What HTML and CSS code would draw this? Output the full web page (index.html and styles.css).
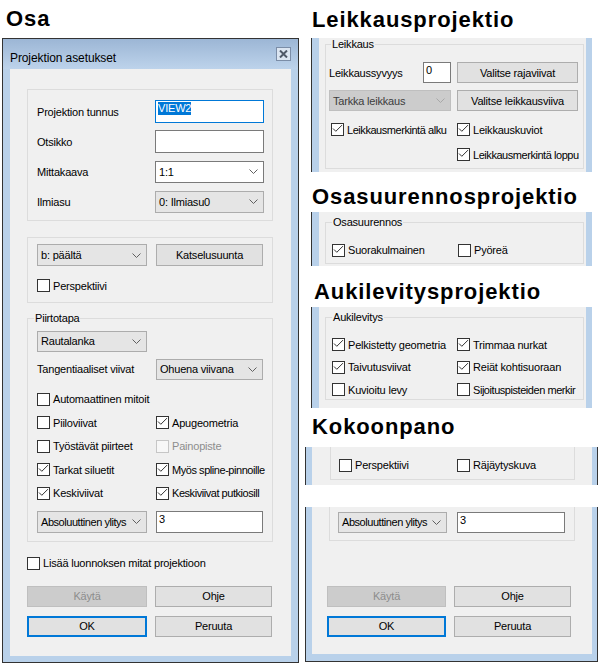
FILE: index.html
```html
<!DOCTYPE html>
<html>
<head>
<meta charset="utf-8">
<link rel="stylesheet" href="styles.css">
</head>
<body>
<div class="page">
  <div class="col-left">
    <div class="h h-osa">Osa</div>
    <div class="dialog">
      <div class="titlebar">
        <span class="title">Projektion asetukset</span>
        <span class="close"><svg width="9" height="8" viewBox="0 0 9 8"><path d="M1 0.5L8 7.5M8 0.5L1 7.5" stroke="#4f5968" stroke-width="2" fill="none"/></svg></span>
      </div>
      <div class="frame">
        <div class="client main">
          <div class="grp g1">
            <div class="row"><span class="lbl">Projektion tunnus</span><div class="tb focus"><span class="sel">VIEW2</span></div></div>
            <div class="row"><span class="lbl">Otsikko</span><div class="tb"></div></div>
            <div class="row"><span class="lbl">Mittakaava</span><div class="dd white"><span class="txt">1:1</span><svg class="chev" width="9" height="5" viewBox="0 0 9 5"><path d="M0.5 0.5L4.5 4.5L8.5 0.5" fill="none" stroke="#606060"/></svg></div></div>
            <div class="row"><span class="lbl">Ilmiasu</span><div class="dd"><span class="txt">0: Ilmiasu0</span><svg class="chev" width="9" height="5" viewBox="0 0 9 5"><path d="M0.5 0.5L4.5 4.5L8.5 0.5" fill="none" stroke="#606060"/></svg></div></div>
          </div>
          <div class="grp g2">
            <div class="row"><div class="dd"><span class="txt">b: päältä</span><svg class="chev" width="9" height="5" viewBox="0 0 9 5"><path d="M0.5 0.5L4.5 4.5L8.5 0.5" fill="none" stroke="#606060"/></svg></div><div class="btn">Katselusuunta</div></div>
            <div class="cb"><span class="box"></span>Perspektiivi</div>
          </div>
          <fieldset class="grp g3">
            <legend>Piirtotapa</legend>
            <div class="dd draw"><span class="txt">Rautalanka</span><svg class="chev" width="9" height="5" viewBox="0 0 9 5"><path d="M0.5 0.5L4.5 4.5L8.5 0.5" fill="none" stroke="#606060"/></svg></div>
            <div class="row tan"><span class="lbl">Tangentiaaliset viivat</span><div class="dd"><span class="txt">Ohuena viivana</span><svg class="chev" width="9" height="5" viewBox="0 0 9 5"><path d="M0.5 0.5L4.5 4.5L8.5 0.5" fill="none" stroke="#606060"/></svg></div></div>
            <div class="cbrow first"><div class="cb c1"><span class="box"></span>Automaattinen mitoit</div></div>
            <div class="cbrow"><div class="cb c1"><span class="box"></span>Piiloviivat</div><div class="cb c2"><span class="box"><svg width="11" height="11" viewBox="0 0 11 11"><path d="M1 4.5L3.8 7.3L10 1.1" fill="none" stroke="#333"/></svg></span>Apugeometria</div></div>
            <div class="cbrow"><div class="cb c1"><span class="box"></span>Työstävät piirteet</div><div class="cb c2 off"><span class="box"></span>Painopiste</div></div>
            <div class="cbrow"><div class="cb c1"><span class="box"><svg width="11" height="11" viewBox="0 0 11 11"><path d="M1 4.5L3.8 7.3L10 1.1" fill="none" stroke="#333"/></svg></span>Tarkat siluetit</div><div class="cb c2 tight"><span class="box"><svg width="11" height="11" viewBox="0 0 11 11"><path d="M1 4.5L3.8 7.3L10 1.1" fill="none" stroke="#333"/></svg></span>Myös spline-pinnoille</div></div>
            <div class="cbrow"><div class="cb c1"><span class="box"><svg width="11" height="11" viewBox="0 0 11 11"><path d="M1 4.5L3.8 7.3L10 1.1" fill="none" stroke="#333"/></svg></span>Keskiviivat</div><div class="cb c2 tight"><span class="box"><svg width="11" height="11" viewBox="0 0 11 11"><path d="M1 4.5L3.8 7.3L10 1.1" fill="none" stroke="#333"/></svg></span>Keskiviivat putkiosill</div></div>
            <div class="row abs"><div class="dd"><span class="txt tight">Absoluuttinen ylitys</span><svg class="chev" width="9" height="5" viewBox="0 0 9 5"><path d="M0.5 0.5L4.5 4.5L8.5 0.5" fill="none" stroke="#606060"/></svg></div><div class="tb">3</div></div>
          </fieldset>
          <div class="cb lisaa"><span class="box"></span>Lisää luonnoksen mitat projektioon</div>
          <div class="btns">
            <div class="btn off">Käytä</div>
            <div class="btn">Ohje</div>
            <div class="btn ok">OK</div>
            <div class="btn">Peruuta</div>
          </div>
        </div>
      </div>
    </div>
  </div>

  <div class="col-right">
    <div class="h h-leik">Leikkausprojektio</div>
    <div class="panel pa p1">
      <div class="pclient">
        <fieldset class="grp gl">
          <legend>Leikkaus</legend>
          <div class="row r1"><span class="lbl">Leikkaussyvyys</span><div class="tb">0</div><div class="btn">Valitse rajaviivat</div></div>
          <div class="row r2"><div class="dd dis"><span class="txt">Tarkka leikkaus</span><svg class="chev" width="9" height="5" viewBox="0 0 9 5"><path d="M0.5 0.5L4.5 4.5L8.5 0.5" fill="none" stroke="#a8a8a8"/></svg></div><div class="btn">Valitse leikkausviiva</div></div>
          <div class="r3"><div class="cb tight"><span class="box"><svg width="11" height="11" viewBox="0 0 11 11"><path d="M1 4.5L3.8 7.3L10 1.1" fill="none" stroke="#333"/></svg></span>Leikkausmerkintä alku</div><div class="cb"><span class="box"><svg width="11" height="11" viewBox="0 0 11 11"><path d="M1 4.5L3.8 7.3L10 1.1" fill="none" stroke="#333"/></svg></span>Leikkauskuviot</div></div>
          <div class="r4"><div class="cb tight"><span class="box"><svg width="11" height="11" viewBox="0 0 11 11"><path d="M1 4.5L3.8 7.3L10 1.1" fill="none" stroke="#333"/></svg></span>Leikkausmerkintä loppu</div></div>
        </fieldset>
      </div>
    </div>

    <div class="h h-osas">Osasuurennosprojektio</div>
    <div class="panel pa p2">
      <div class="pclient">
        <fieldset class="grp go">
          <legend>Osasuurennos</legend>
          <div class="cbrow"><div class="cb c1"><span class="box"><svg width="11" height="11" viewBox="0 0 11 11"><path d="M1 4.5L3.8 7.3L10 1.1" fill="none" stroke="#333"/></svg></span>Suorakulmainen</div><div class="cb"><span class="box"></span>Pyöreä</div></div>
        </fieldset>
      </div>
    </div>

    <div class="h h-auki">Aukilevitysprojektio</div>
    <div class="panel pa p3">
      <div class="pclient">
        <fieldset class="grp ga">
          <legend>Aukilevitys</legend>
          <div class="cbrow"><div class="cb c1"><span class="box"><svg width="11" height="11" viewBox="0 0 11 11"><path d="M1 4.5L3.8 7.3L10 1.1" fill="none" stroke="#333"/></svg></span>Pelkistetty geometria</div><div class="cb c2"><span class="box"><svg width="11" height="11" viewBox="0 0 11 11"><path d="M1 4.5L3.8 7.3L10 1.1" fill="none" stroke="#333"/></svg></span>Trimmaa nurkat</div></div>
          <div class="cbrow"><div class="cb c1"><span class="box"><svg width="11" height="11" viewBox="0 0 11 11"><path d="M1 4.5L3.8 7.3L10 1.1" fill="none" stroke="#333"/></svg></span>Taivutusviivat</div><div class="cb c2"><span class="box"><svg width="11" height="11" viewBox="0 0 11 11"><path d="M1 4.5L3.8 7.3L10 1.1" fill="none" stroke="#333"/></svg></span>Reiät kohtisuoraan</div></div>
          <div class="cbrow"><div class="cb c1"><span class="box"></span>Kuvioitu levy</div><div class="cb c2 tight"><span class="box"></span>Sijoituspisteiden merkir</div></div>
        </fieldset>
      </div>
    </div>

    <div class="h h-koko">Kokoonpano</div>
    <div class="panel pb p4">
      <div class="pclient">
        <div class="grp open gk">
          <div class="cbrow"><div class="cb c1"><span class="box"></span>Perspektiivi</div><div class="cb"><span class="box"></span>Räjäytyskuva</div></div>
        </div>
      </div>
    </div>

    <div class="panel pb p5">
      <div class="pclient">
        <div class="grp open gx">
          <div class="row"><div class="dd"><span class="txt tight">Absoluuttinen ylitys</span><svg class="chev" width="9" height="5" viewBox="0 0 9 5"><path d="M0.5 0.5L4.5 4.5L8.5 0.5" fill="none" stroke="#606060"/></svg></div><div class="tb">3</div></div>
        </div>
        <div class="btns btns2">
          <div class="btn off">Käytä</div>
          <div class="btn">Ohje</div>
          <div class="btn ok">OK</div>
          <div class="btn">Peruuta</div>
        </div>
      </div>
    </div>
  </div>
</div>
</body>
</html>
```

FILE: styles.css
```css
* { box-sizing: border-box; }
html, body { margin: 0; padding: 0; background: #fff; }
body {
  width: 600px; height: 668px; overflow: hidden;
  font-family: "Liberation Sans", Arial, sans-serif;
  font-size: 11px; letter-spacing: -0.2px; color: #000;
}
.page { display: flex; align-items: flex-start; }
.col-left { width: 300px; flex: none; }
.col-right { width: 300px; flex: none; display: flex; flex-direction: column; }

/* headings */
.h { margin: 0; font-size: 22px; line-height: 26px; font-weight: bold; letter-spacing: 0.9px; white-space: nowrap; flex: none; }
.h-osa { height: 38px; padding: 6px 0 0 6px; }
.h-leik { height: 38px; padding: 7px 0 0 12px; }
.h-osas { height: 40px; padding: 12px 0 0 12px; }
.h-auki { height: 41px; padding: 13px 0 0 14px; }
.h-koko { height: 39px; padding: 6px 0 0 12px; }

/* dialog window */
.dialog { margin-left: 2px; width: 297px; height: 625px; border: 1px solid #333; background: #b9d1ea; display: flex; flex-direction: column; }
.titlebar { flex: none; height: 30px; display: flex; justify-content: space-between; align-items: flex-start; padding: 0 7px; background: linear-gradient(#9cb6d5, #bdd3eb); }
.title { font-size: 12px; line-height: 14px; letter-spacing: -0.1px; padding-top: 12px; }
.close { margin-top: 8px; width: 15px; height: 14px; border: 1px solid #7b8da7; background: #dbe5f1; display: flex; align-items: center; justify-content: center; }
.frame { flex: 1; padding: 0 7px 6px; }
.client { background: #f0f0f0; }
.main { height: 100%; padding: 20px 18px 0 17px; }

/* common controls */
.grp { border: 1px solid #dcdcdc; margin: 0; min-width: 0; }
legend { font-size: 11px; line-height: 13px; padding: 0 1px; }
.row { display: flex; align-items: center; }
.lbl { flex: none; white-space: nowrap; }
.tb { flex: none; background: #fff; border: 1px solid #7a7a7a; padding: 1px 2px; line-height: 13px; white-space: nowrap; overflow: hidden; }
.tb.focus { border-color: #0078d7; }
.sel { display: inline-block; background: #0078d7; color: #fff; line-height: 13px; }
.dd { flex: none; display: flex; align-items: center; gap: 2px; border: 1px solid #acacac; background: #e5e5e5; padding: 0 5px 0 3px; white-space: nowrap; }
.dd .txt { flex: 1; min-width: 0; }
.chev { flex: none; margin-left: auto; }
.dd.white { background: #fff; border-color: #7a7a7a; }
.dd.dis { background: #ccc; border-color: #bfbfbf; color: #3c3c3c; }
.btn { flex: none; display: flex; align-items: center; justify-content: center; border: 1px solid #adadad; background: #e1e1e1; white-space: nowrap; }
.btn.ok { border: 2px solid #0078d7; }
.btn.off { background: #ccc; border-color: #bfbfbf; color: #8d8d8d; }
.cb { flex: none; display: flex; align-items: center; height: 16px; white-space: nowrap; }
.box { flex: none; width: 13px; height: 13px; margin-right: 3px; border: 1px solid #333; background: #fff; display: flex; align-items: center; justify-content: center; }
.cb.off { color: #8d8d8d; }
.cb.off .box { border-color: #c6c6c6; background: #f7f7f7; }
.cbrow { display: flex; }
.tight { letter-spacing: -0.45px; }

/* left dialog, group 1 */
.g1 { padding: 10px 8px 7px 9px; display: flex; flex-direction: column; gap: 7px; }
.g1 .row { height: 23px; }
.g1 .lbl { width: 118px; }
.g1 .tb { width: 109px; height: 23px; }
.g1 .dd { width: 109px; height: 22px; }

/* group 2 */
.g2 { margin-top: 16px; padding: 6px 8px 8px 9px; }
.g2 .row { height: 22px; }
.g2 .dd { width: 110px; height: 22px; }
.g2 .btn { width: 107px; height: 22px; margin-left: 9px; }
.g2 .cb { margin-top: 11.5px; }

/* group 3 */
.g3 { margin-top: 9px; padding: 6px 8px 8px 9px; }
.g3 legend { margin-left: -3px; }
.g3 .draw { width: 110px; height: 21px; }
.g3 .tan { margin-top: 7px; height: 21px; }
.g3 .tan .lbl { width: 119px; }
.g3 .tan .dd { width: 107px; height: 21px; }
.g3 .cbrow { margin-top: 7.5px; }
.g3 .cbrow.first { margin-top: 11.5px; }
.g3 .c1 { width: 119px; }
.g3 .c2 { width: 107px; }
.g3 .abs { margin-top: 9.5px; height: 22px; }
.g3 .abs .dd { width: 110px; height: 22px; }
.g3 .abs .tb { width: 107px; height: 22px; margin-left: 9px; }

.lisaa { margin-top: 13.5px; }
.btns { display: grid; grid-template-columns: 120px 117px; column-gap: 8px; row-gap: 9px; margin-top: 14.5px; }
.btns .btn { height: 21px; }

/* right panels */
.panel { flex: none; display: flex; background: #b9d1ea; border-left: 1px solid #333; }
.pa { margin-left: 11px; width: 281px; padding: 0 6px 0 7px; }
.pb { margin-left: 5px; width: 293px; padding: 0 5px 0 6px; border-right: 1px solid #333; }
.pclient { flex: 1; background: #f0f0f0; overflow: hidden; }
.pa .pclient { padding-left: 6px; }
.p1 { height: 134px; }
.p2 { height: 54px; }
.p3 { height: 101px; }
.p4 { height: 38px; }
.p5 { height: 155px; margin-top: 22px; border-bottom: 1px solid #333; padding-bottom: 7px; }

.gl { width: 259px; padding: 12px 0 5.5px 3px; }
.gl legend { line-height: 12px; margin-left: 2px; }
.gl .r1, .gl .r2 { height: 21px; }
.gl .r2 { margin-top: 7px; }
.gl .r1 .lbl { width: 94px; }
.gl .r1 .tb { width: 28px; height: 21px; }
.gl .btn { width: 121px; height: 21px; margin-left: 6px; }
.gl .r2 .dd { width: 122px; height: 21px; }
.gl .r3 { display: flex; margin-top: 10.5px; padding-left: 2px; }
.gl .r3 .cb { width: 121px; }
.gl .r3 .cb + .cb { margin-left: 5px; }
.gl .r4 { display: flex; margin-top: 9px; padding-left: 128px; }
.gl .r4 .cb { width: 121px; }

.go { margin-top: 4px; width: 259px; padding: 14px 0 5px 6px; }
.go legend { line-height: 12px; }
.go .c1 { width: 126px; }

.ga { margin-top: 4px; width: 259px; padding: 13.5px 0 1.5px 6px; }
.ga legend { line-height: 12px; }
.ga .cbrow + .cbrow { margin-top: 6.5px; }
.ga .c1 { width: 125px; }
.ga .c2 { width: 124px; }

.grp.open { border-top: none; }
.gk { margin-left: 18px; width: 245px; padding: 10px 0 6px 8px; }
.gk .c1 { width: 118px; }
.gx { margin-left: 17px; width: 246px; padding: 4.5px 0 7px 8px; }
.gx .row { height: 21px; }
.gx .dd { width: 109px; height: 21px; }
.gx .tb { width: 108px; height: 21px; margin-left: 10px; }
.btns2 { grid-template-columns: 119px 117px; margin: 45px 0 0 15px; }
```
